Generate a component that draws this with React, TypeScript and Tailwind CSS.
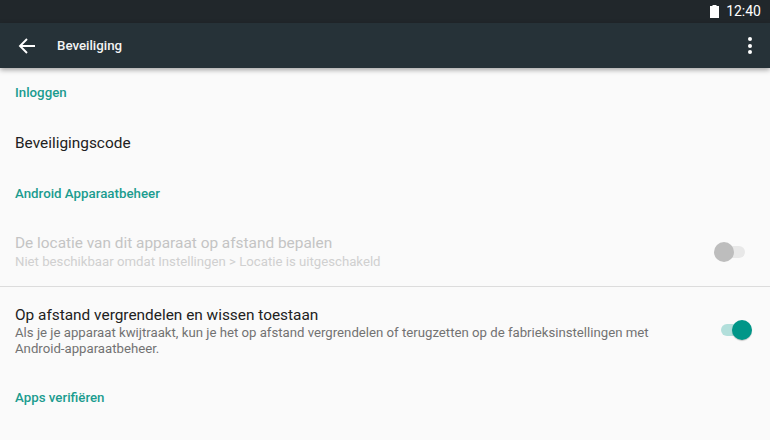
export default function App() {
  return (
    <div className="w-[770px] h-[440px] overflow-hidden bg-[#fafafa] flex flex-col font-['Roboto',sans-serif]">
      <div className="h-[23px] bg-[#21272b] flex items-center justify-end pr-[9px] gap-[7px] text-white shrink-0">
        <svg width="9" height="13" viewBox="0 0 9 13"><path d="M2.5 0h4v1H9v12H0V1h2.5z" fill="#fff" /></svg>
        <span className="text-[14px] leading-[23px]">12:40</span>
      </div>
      <div className="h-[45px] bg-[#263238] flex items-center shrink-0 shadow-[0_2px_5px_rgba(0,0,0,0.35)] relative z-10 text-white">
        <svg className="ml-[18px]" width="17" height="16" viewBox="0 0 17 16" fill="none" stroke="#fff" strokeWidth="1.9"><path d="M17 8H2M9 1 2 8l7 7" /></svg>
        <span className="ml-[22px] text-[13.3px] font-medium text-[#f3f4f4]">Beveiliging</span>
        <div className="ml-auto mr-[18px] flex flex-col gap-[2.5px]">
          <div className="w-[4px] h-[4px] rounded-full bg-white" />
          <div className="w-[4px] h-[4px] rounded-full bg-white" />
          <div className="w-[4px] h-[4px] rounded-full bg-white" />
        </div>
      </div>
      <div className="flex-1 flex flex-col">
        <div className="h-[49px] pl-[15px] flex items-center text-[13.3px] font-medium text-[#1b9c8f]">Inloggen</div>
        <div className="h-[53px] pl-[15px] flex items-center text-[15.4px] text-[#212121]">Beveiligingscode</div>
        <div className="h-[47px] pl-[15px] flex items-center text-[13.3px] font-medium text-[#1b9c8f]">Android Apparaatbeheer</div>
        <div className="h-[70px] pl-[15px] pr-[25px] flex items-center justify-between border-b border-[#dcdcdc]">
          <div>
            <div className="text-[15.4px] leading-[20px] text-[#c4c4c4]">De locatie van dit apparaat op afstand bepalen</div>
            <div className="text-[13.2px] leading-[17px] text-[#d0d0d0]">Niet beschikbaar omdat Instellingen &gt; Locatie is uitgeschakeld</div>
          </div>
          <div className="relative w-[27px] h-[12px] rounded-full bg-[#e8e8e8]">
            <div className="absolute left-[-4px] top-[-4px] w-[20px] h-[20px] rounded-full bg-[#bdbdbd]" />
          </div>
        </div>
        <div className="h-[88px] pl-[15px] pr-[22px] flex items-center justify-between">
          <div className="w-[660px]">
            <div className="text-[15.4px] leading-[20px] text-[#212121]">Op afstand vergrendelen en wissen toestaan</div>
            <div className="text-[13.2px] leading-[16px] text-[#727272]">Als je je apparaat kwijtraakt, kun je het op afstand vergrendelen of terugzetten op de fabrieksinstellingen met Android-apparaatbeheer.</div>
          </div>
          <div className="relative w-[27px] h-[12px] mb-[2px] rounded-full bg-[#b2dfdb]">
            <div className="absolute right-[-4px] top-[-4px] w-[20px] h-[20px] rounded-full bg-[#009688] shadow-[0_1px_1px_rgba(0,0,0,0.2)]" />
          </div>
        </div>
        <div className="h-[46px] pl-[15px] flex items-center text-[13.3px] font-medium text-[#1b9c8f]">Apps verifiëren</div>
      </div>
    </div>
  );
}
